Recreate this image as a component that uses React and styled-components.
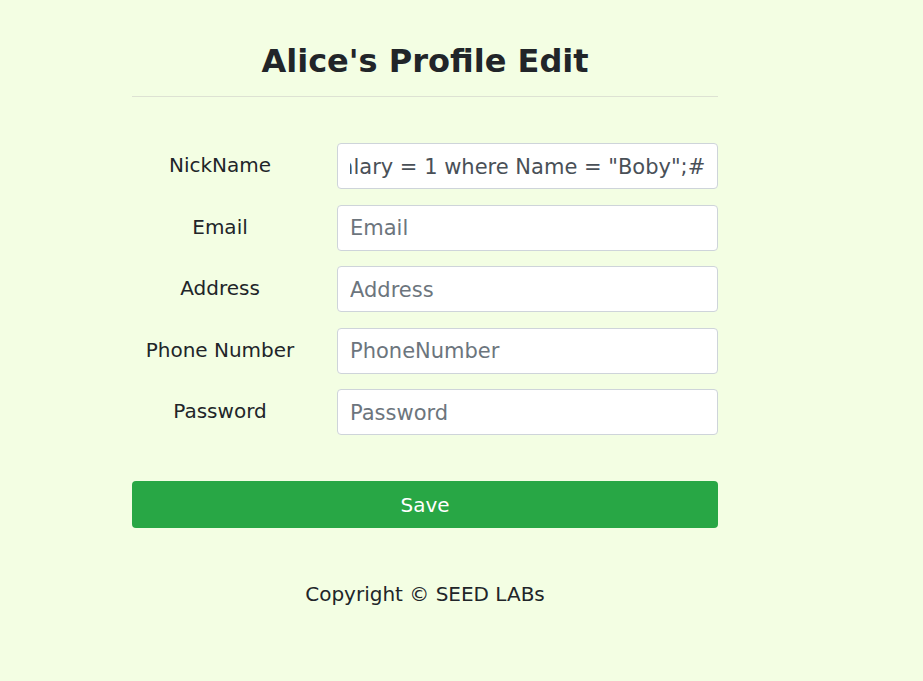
import React, { useEffect, useRef } from 'react';
import styled, { createGlobalStyle } from 'styled-components';

const GlobalStyle = createGlobalStyle`
  html, body {
    margin: 0;
    padding: 0;
    background: #f3fee3;
    font-family: "DejaVu Sans", "Liberation Sans", sans-serif;
    color: #212529;
  }
`;

const Page = styled.div`
  min-height: 681px;
  padding-left: 132px;
  box-sizing: border-box;
`;

const Main = styled.div`
  width: 586px;
  display: flex;
  flex-direction: column;
`;

const Title = styled.h2`
  margin: 42px 0 0;
  font-size: 32px;
  line-height: 38px;
  font-weight: bold;
  text-align: center;
`;

const Divider = styled.hr`
  margin: 16px 0 0;
  border: 0;
  border-top: 1px solid #dde2d3;
`;

const Fields = styled.div`
  margin-top: 46px;
  display: flex;
  flex-direction: column;
  gap: 15.5px;
`;

const Row = styled.div`
  display: grid;
  grid-template-columns: 176px 1fr;
  column-gap: 29px;
  align-items: center;
`;

const Label = styled.label`
  font-size: 20px;
  text-align: center;
  margin-top: -2px;
`;

const Input = styled.input`
  height: 46px;
  box-sizing: border-box;
  width: 100%;
  padding: 1px 12px 0;
  border: 1px solid #ced4da;
  border-radius: 4px;
  background: #fff;
  font-family: "DejaVu Sans", "Liberation Sans", sans-serif;
  font-size: 21px;
  color: #495057;
  outline: none;

  &::placeholder {
    color: #6c757d;
  }
`;

const SaveButton = styled.button`
  margin-top: 46px;
  height: 47px;
  width: 100%;
  padding-top: 2px;
  border: 0;
  border-radius: 4px;
  background: #28a745;
  color: #fff;
  font-family: "DejaVu Sans", "Liberation Sans", sans-serif;
  font-size: 20px;
`;

const Footer = styled.p`
  margin: 54px 0 0;
  text-align: center;
  font-size: 20px;
  line-height: 24px;
  color: #212529;
`;

const fields = [
  { label: 'Email', placeholder: 'Email' },
  { label: 'Address', placeholder: 'Address' },
  { label: 'Phone Number', placeholder: 'PhoneNumber' },
  { label: 'Password', placeholder: 'Password', type: 'password' }
];

const App = () => {
  const nickRef = useRef(null);

  useEffect(() => {
    const el = nickRef.current;
    if (el) el.scrollLeft = el.scrollWidth;
  }, []);

  return (
    <Page>
      <GlobalStyle />
      <Main>
        <Title>Alice's Profile Edit</Title>
        <Divider />
        <Fields>
          <Row>
            <Label>NickName</Label>
            <Input
              ref={nickRef}
              type="text"
              defaultValue={`Alice', salary = 1 where Name = "Boby";#`}
            />
          </Row>
          {fields.map(f => (
            <Row key={f.label}>
              <Label>{f.label}</Label>
              <Input type={f.type || 'text'} placeholder={f.placeholder} />
            </Row>
          ))}
        </Fields>
        <SaveButton>Save</SaveButton>
        <Footer>Copyright © SEED LABs</Footer>
      </Main>
    </Page>
  );
};

export default App;
